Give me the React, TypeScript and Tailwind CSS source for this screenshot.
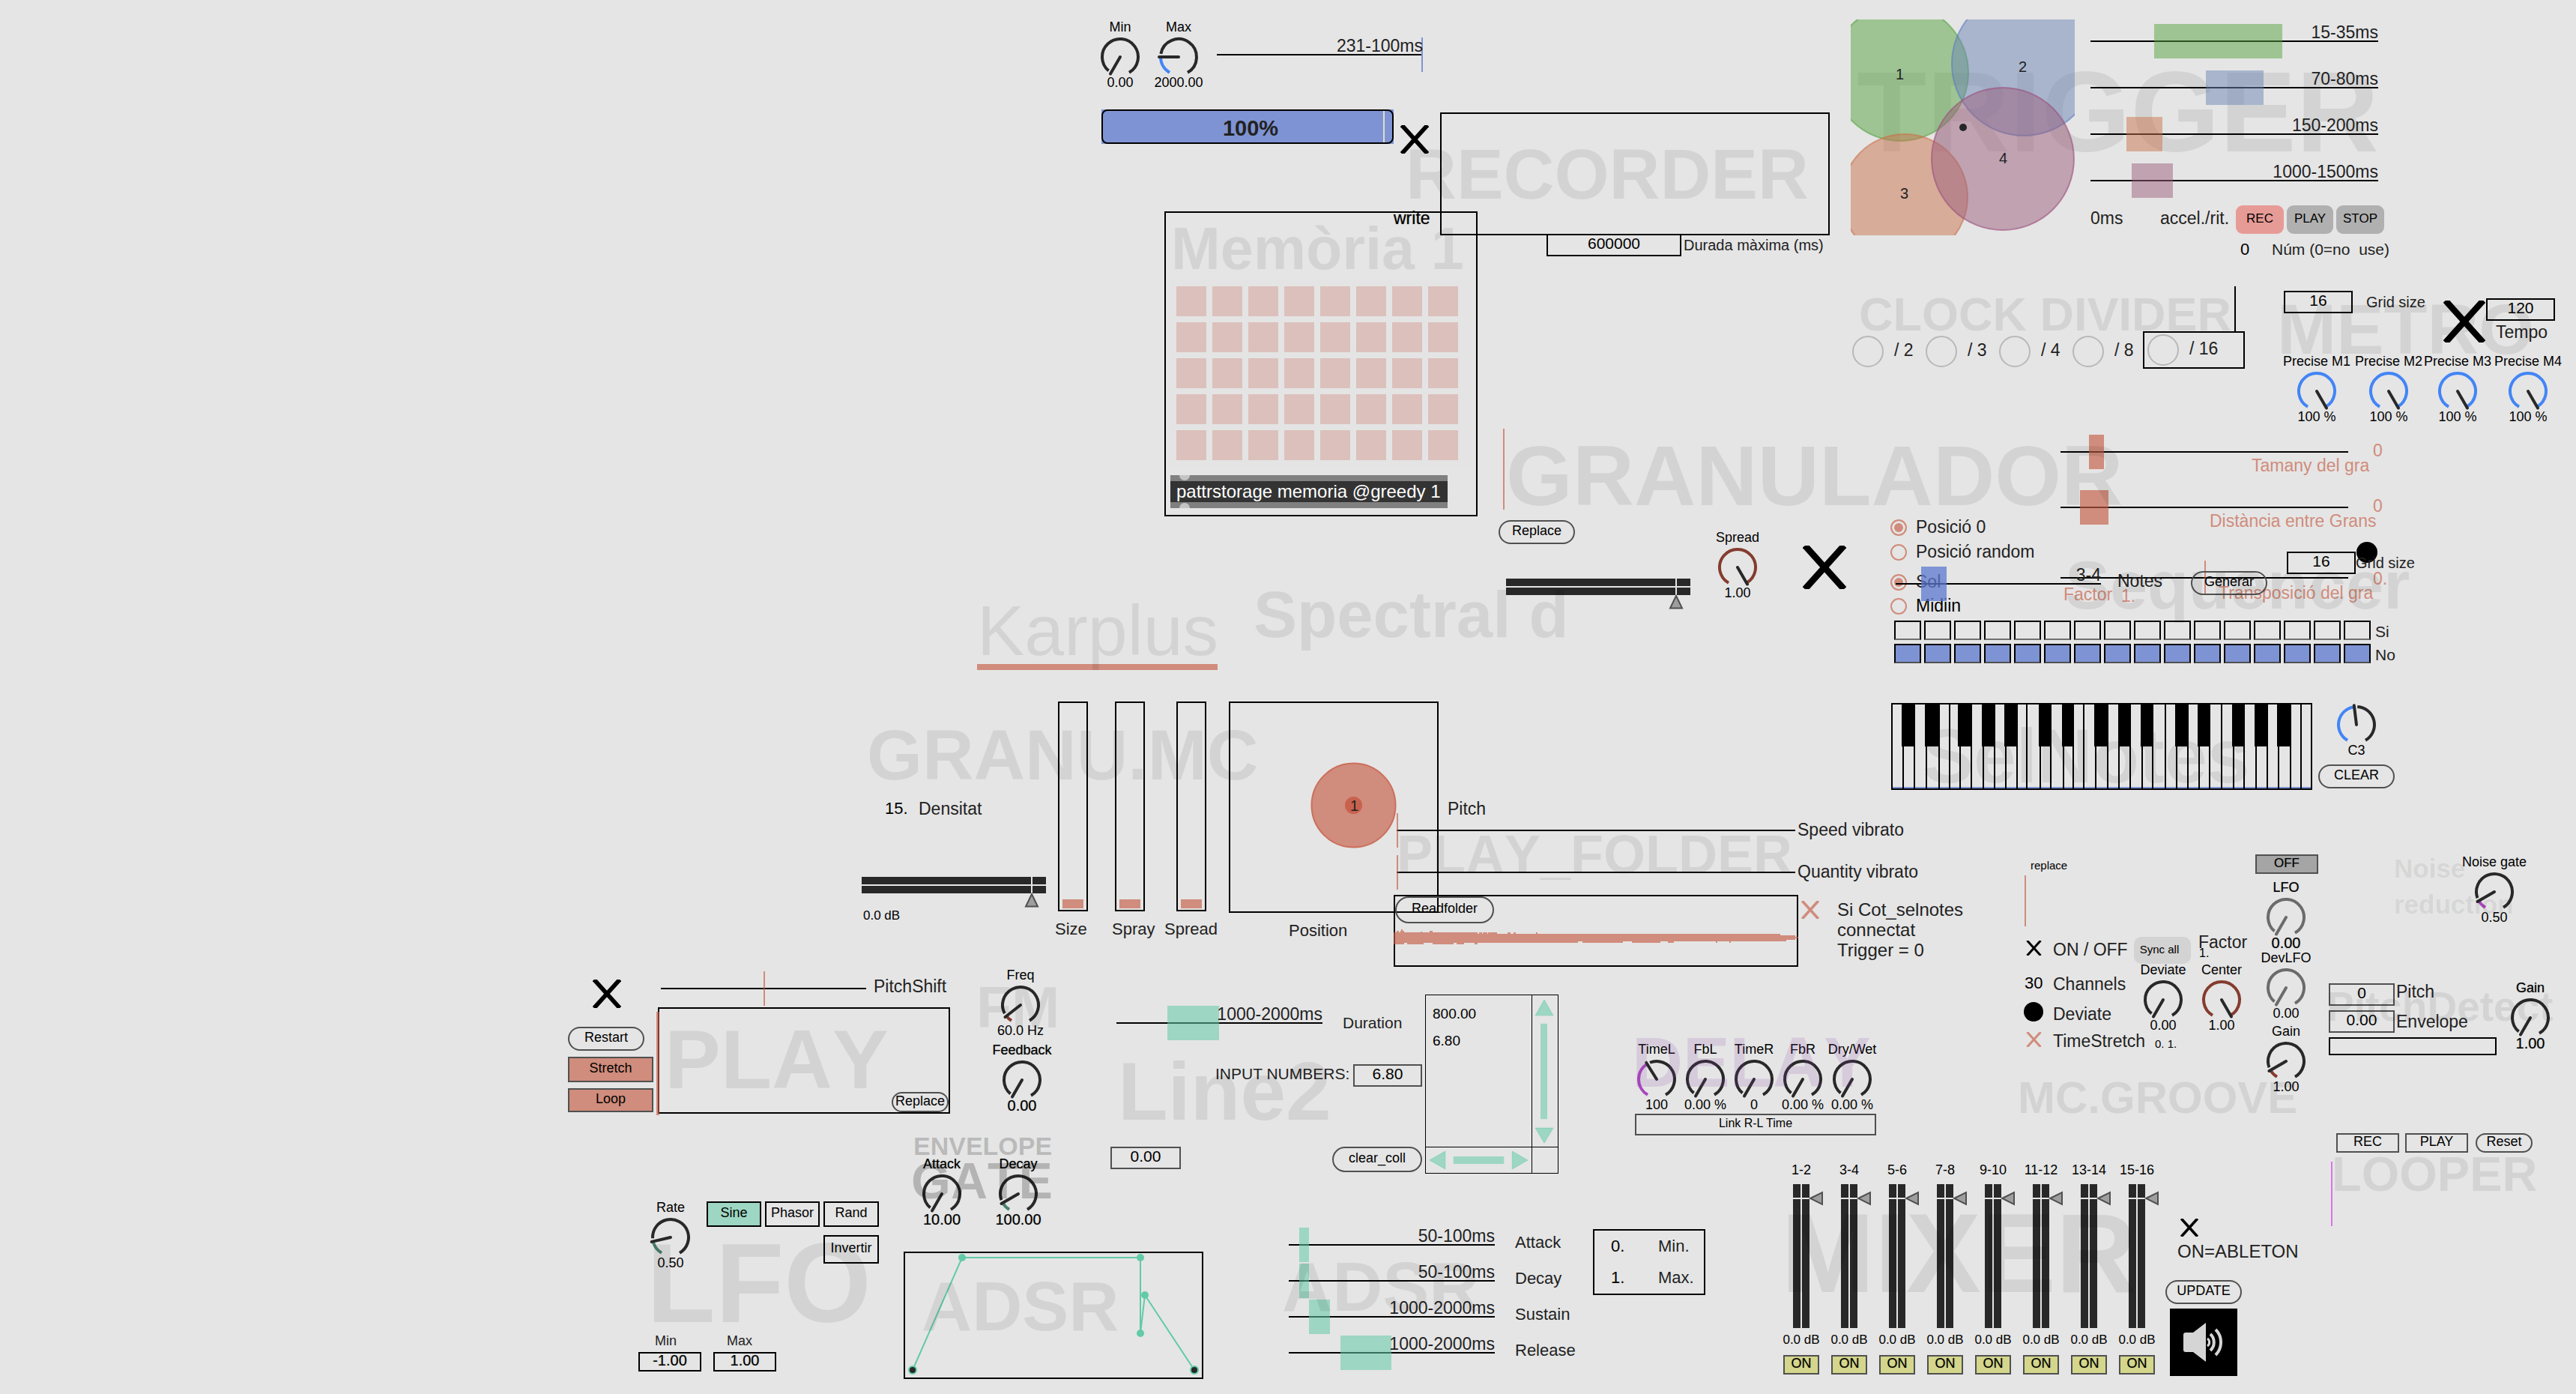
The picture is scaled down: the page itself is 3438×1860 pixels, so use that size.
import React from "react";

type Box = { c: string };

function Text({ c, children }: { c: string; children: React.ReactNode }) {
  return <span className={"absolute whitespace-pre leading-none " + c}>{children}</span>;
}

function Title({ c, children }: { c: string; children: React.ReactNode }) {
  return (
    <h2 className={"pointer-events-none absolute whitespace-pre leading-none [font-kerning:none] " + c}>
      {children}
    </h2>
  );
}

function point(angle: number, r: number) {
  const a = (angle * Math.PI) / 180;
  return `${(30 - r * Math.sin(a)).toFixed(2)} ${(28 + r * Math.cos(a)).toFixed(2)}`;
}

function arc(from: number, to: number) {
  return `M${point(from, 24)} A24 24 0 ${to - from > 180 ? 1 : 0} 1 ${point(to, 24)}`;
}

type DialProps = {
  c: string;
  label?: string;
  value: string;
  at?: number;
  color?: string;
  ink?: string;
  strong?: boolean;
};

function Dial({ c, label = "", value, at = 30, color = "#843c2e", ink = "#282828", strong = false }: DialProps) {
  return (
    <label className={"absolute flex w-[120px] flex-col items-center text-[18px] leading-[18px] whitespace-pre text-black " + c}>
      <span className={strong ? "h-[18px] [text-shadow:0_0_1px_#0008]" : "h-[18px]"}>{label}</span>
      <svg className="mt-[3px] h-[52px] w-[60px] overflow-visible" viewBox="0 0 60 52" fill="none" strokeWidth="4">
        {at > 30 && <path d={arc(30, at)} stroke={color} />}
        {at < 320 && <path d={arc(at + 10, 330)} stroke={ink} />}
        <path d={`M30 28 L${point(at, 26)}`} stroke={ink} strokeLinecap="round" />
      </svg>
      <span className={strong ? "mt-[1px] text-[20px] [text-shadow:0_0_1px_#0006]" : "mt-[1px]"}>{value}</span>
      <input
        type="range"
        min={30}
        max={330}
        defaultValue={at}
        aria-label={label || value}
        className="absolute inset-0 size-full cursor-pointer appearance-none opacity-0"
      />
    </label>
  );
}

function Range({ c, block, text, name }: { c: string; block: string; text?: string; name: string }) {
  return (
    <div className={"absolute h-[46px] " + c}>
      <div className="absolute inset-x-0 top-[22px] h-[2px] bg-black" />
      <div className={"absolute inset-y-0 " + block} />
      {text && <span className="absolute top-0 right-0 text-[23px] leading-none whitespace-pre text-[#222]">{text}</span>}
      <input type="range" aria-label={name} className="absolute inset-0 size-full appearance-none opacity-0" />
    </div>
  );
}

function NumberBox({ c, value, name }: { c: string; value: string; name: string }) {
  return (
    <input
      type="text"
      aria-label={name}
      defaultValue={value}
      className={"absolute border-2 bg-transparent pb-1 text-center leading-none outline-none " + c}
    />
  );
}

function Button({ c, children }: { c: string; children: React.ReactNode }) {
  return (
    <button type="button" className={"flex items-center justify-center pb-1 leading-none whitespace-pre text-black " + c}>
      {children}
    </button>
  );
}

const pill = "absolute rounded-full border-2 border-[#505050] text-[18px] ";

function Cross({ c, width, name, color = "#000" }: { c: string; width: number; name: string; color?: string }) {
  return (
    <label className={"absolute overflow-hidden " + c}>
      <input type="checkbox" defaultChecked aria-label={name} className="absolute inset-0 size-full appearance-none" />
      <svg className="size-full" viewBox="0 0 40 40" stroke={color} strokeWidth={width}>
        <path d="M2 0 L38 40" />
        <path d="M38 0 L2 40" />
      </svg>
    </label>
  );
}

function Radio({ c, name, label, on = false, textClass }: { c: string; name: string; label: string; on?: boolean; textClass: string }) {
  return (
    <label className={"absolute flex items-center gap-[12px] whitespace-pre " + c}>
      <input
        type="radio"
        name={name}
        defaultChecked={on}
        className="size-[22px] appearance-none rounded-full border-2 border-[#d08c7c] checked:bg-[#d08c7c] checked:shadow-[inset_0_0_0_3px_#e5e5e5]"
      />
      <span className={"text-[23px] leading-none " + textClass}>{label}</span>
    </label>
  );
}

function Meter({ c }: Box) {
  return (
    <div className={"absolute flex w-[246px] flex-col gap-[2px] " + c}>
      <div className="h-[10px] bg-[#282828]" />
      <div className="h-[10px] bg-[#282828]" />
      <div className="absolute top-0 left-[226px] h-[22px] w-[2px] bg-[#e5e5e5]" />
      <svg className="absolute top-[21px] left-[217px] h-[20px] w-[20px]" viewBox="0 0 20 20">
        <path d="M10 2 L18 18.500 H2 Z" fill="#9e9e9e" stroke="#505050" strokeWidth="2" />
      </svg>
      <input type="range" aria-label="Gain" className="absolute inset-0 size-full appearance-none opacity-0" />
    </div>
  );
}

const PRESETS = Array.from({ length: 40 }, (_, i) => i + 1);
const STEPS = Array.from({ length: 16 }, (_, i) => i + 1);
const CHANNELS = ["1-2", "3-4", "5-6", "7-8", "9-10", "11-12", "13-14", "15-16"];
const KEY_LINES = [
  16, 31, 47, 64, 78, 92, 107, 123, 138, 153, 168, 181, 199, 213, 230, 243, 257, 273, 289, 304, 319, 335, 349, 366, 381,
  396, 411, 425, 441, 457, 471, 487, 502, 517, 533, 547,
];
const BLACK_KEYS = [
  [15, 17], [46, 17], [90, 18], [122, 16], [152, 17], [198, 16], [229, 15], [272, 17], [304, 16], [334, 16], [380, 16],
  [410, 16], [456, 16], [486, 17], [516, 18],
];

function TopSection() {
  return (
    <section aria-label="Recorder">
      <Dial c="left-[1435px] top-[27px]" label="Min" value="0.00" />
      <Dial c="left-[1513px] top-[27px]" label="Max" value="2000.00" at={90} color="#4285f6" />
      <Range c="left-[1624px] top-[50px] w-[275px]" block="right-0 w-[2px] bg-[#7e93d3]" text="231-100ms" name="Time" />
      <div className="absolute top-[146px] left-[1470px] flex h-[46px] w-[390px] bg-[#7e93d3]">
        <div className="flex w-full items-center justify-center rounded-[8px] border-2 border-black pt-[4px] pl-[8px] text-[29px] leading-none font-bold text-[#222]">
          100%
        </div>
        <div className="absolute top-[2px] right-[12px] h-[42px] w-[2px] bg-[#e0ddd0]" />
      </div>
      <Cross c="left-[1869px] top-[167px] h-[38px] w-[38px]" width={6} name="Record" />
      <div className="absolute top-[150px] left-[1922px] h-[164px] w-[520px] border-2 border-black" />
      <Text c="left-[1860px] top-[280px] text-[23px] text-black [text-shadow:0_0_1px_#0008]">write</Text>
      <NumberBox c="left-[2064px] top-[312px] h-[30px] w-[180px] border-black text-[21px] text-black" value="600000" name="Durada màxima" />
      <Text c="left-[2247px] top-[317px] text-[20px] text-[#222]">Durada màxima (ms)</Text>
    </section>
  );
}

function Memory() {
  return (
    <section aria-label="Memòria" className="absolute top-[282px] left-[1554px] w-[418px] border-2 border-black px-[6px] pt-[90px] pb-[9px]">
      <div className="grid w-[402px] grid-cols-[repeat(8,40px)] gap-[8px] bg-[#e4e4e4] px-[8px] pt-[8px] pb-[11px]">
        {PRESETS.map((n) => (
          <button key={n} type="button" aria-label={"Preset " + n} className="h-[40px] bg-[#dcc0bc]" />
        ))}
      </div>
      <div className="relative mt-[9px] w-[370px] bg-[#808080] py-[8px]">
        <div className="absolute top-0 left-[12px] h-[7px] w-[14px] rounded-b-full bg-[#c4c4c4]" />
        <div className="absolute bottom-0 left-[12px] h-[7px] w-[14px] rounded-t-full bg-[#c4c4c4]" />
        <div className="bg-[#333] px-[8px] text-[24px] leading-[28px] whitespace-pre text-white">pattrstorage memoria @greedy 1</div>
      </div>
    </section>
  );
}

function Trigger() {
  return (
    <section aria-label="Trigger">
      <Title c="left-[2478px] top-[72px] text-[153px] font-bold text-black/8">TRIGGER</Title>
      <svg className="absolute top-[26px] left-[2470px] h-[288px] w-[299px]" viewBox="2470 26 299 288" strokeWidth="2">
        <circle cx="2536" cy="97" r="91" fill="#55a33f" fillOpacity="0.5" stroke="#55a33f" strokeOpacity="0.6" />
        <circle cx="2701" cy="85" r="96" fill="#6b85b5" fillOpacity="0.5" stroke="#5c7cc0" strokeOpacity="0.6" />
        <circle cx="2542" cy="263" r="84" fill="#c9734d" fillOpacity="0.5" stroke="#c9734d" strokeOpacity="0.6" />
        <circle cx="2673" cy="212" r="95" fill="#9b5f7d" fillOpacity="0.5" stroke="#9b4f7d" strokeOpacity="0.6" />
        <circle cx="2620" cy="170" r="5" fill="#262626" />
      </svg>
      <Text c="left-[2530px] top-[89px] text-[20px] text-[#222]">1</Text>
      <Text c="left-[2694px] top-[79px] text-[20px] text-[#222]">2</Text>
      <Text c="left-[2536px] top-[248px] text-[20px] text-[#222]">3</Text>
      <Text c="left-[2668px] top-[201px] text-[20px] text-[#222]">4</Text>
      <Range c="left-[2790px] top-[32px] w-[384px]" block="left-[85px] w-[171px] bg-[#55a33f]/50" text="15-35ms" name="Trigger 1" />
      <Range c="left-[2790px] top-[94px] w-[384px]" block="left-[154px] w-[77px] bg-[#6b85b5]/50" text="70-80ms" name="Trigger 2" />
      <Range c="left-[2790px] top-[156px] w-[384px]" block="left-[48px] w-[48px] bg-[#c9734d]/50" text="150-200ms" name="Trigger 3" />
      <Range c="left-[2790px] top-[218px] w-[384px]" block="left-[55px] w-[55px] bg-[#9b5f7d]/50" text="1000-1500ms" name="Trigger 4" />
      <Text c="left-[2790px] top-[280px] text-[23px] text-[#222]">0ms</Text>
      <Text c="left-[2883px] top-[280px] text-[23px] text-[#222]">accel./rit.</Text>
      <div className="absolute top-[274px] left-[2984px] flex gap-[4px] text-[17px]">
        <Button c="h-[38px] w-[64px] rounded-[9px] bg-[#e79b96]">REC</Button>
        <Button c="h-[38px] w-[62px] rounded-[9px] bg-[#b0b0b0]">PLAY</Button>
        <Button c="h-[38px] w-[64px] rounded-[9px] bg-[#b0b0b0]">STOP</Button>
      </div>
      <Text c="left-[2990px] top-[322px] text-[22px] text-black">0</Text>
      <Text c="left-[3032px] top-[322px] text-[21px] text-[#222]">{"Núm (0=no  use)"}</Text>
    </section>
  );
}

function ClockAndMetro() {
  return (
    <section aria-label="Clock divider and metro">
      <div className="absolute top-[448px] left-[2472px] flex gap-[14px]">
        {["/ 2", "/ 3", "/ 4", "/ 8"].map((t) => (
          <div key={t} className="flex h-[42px] w-[84px] items-center gap-[14px] whitespace-pre">
            <button type="button" aria-label={t} className="size-[42px] shrink-0 rounded-full border-2 border-[#b8b8b8]" />
            <span className="-mt-[4px] text-[23px] leading-none text-[#222]">{t}</span>
          </div>
        ))}
      </div>
      <div className="absolute top-[382px] left-[2982px] h-[62px] w-[2px] bg-black" />
      <div className="absolute top-[442px] left-[2860px] flex h-[50px] w-[136px] items-center gap-[14px] border-2 border-black pl-[4px]">
        <button type="button" aria-label="/ 16" className="size-[42px] rounded-full border-2 border-[#b8b8b8]" />
        <span className="-mt-[4px] text-[23px] leading-none text-[#222]">/ 16</span>
      </div>
      <NumberBox c="left-[3048px] top-[388px] h-[30px] w-[92px] border-black text-[21px] text-black" value="16" name="Grid size" />
      <Text c="left-[3158px] top-[393px] text-[20px] text-[#222]">Grid size</Text>
      <Cross c="left-[3260px] top-[401px] h-[56px] w-[58px]" width={6} name="Metro" />
      <NumberBox c="left-[3318px] top-[398px] h-[30px] w-[92px] border-black text-[21px] text-black" value="120" name="Tempo" />
      <Text c="left-[3331px] top-[432px] text-[23px] text-[#222]">Tempo</Text>
      <Dial c="left-[3032px] top-[473px]" label="Precise M1" value="100 %" at={330} color="#4285f6" />
      <Dial c="left-[3128px] top-[473px]" label="Precise M2" value="100 %" at={330} color="#4285f6" />
      <Dial c="left-[3220px] top-[473px]" label="Precise M3" value="100 %" at={330} color="#4285f6" />
      <Dial c="left-[3314px] top-[473px]" label="Precise M4" value="100 %" at={330} color="#4285f6" />
    </section>
  );
}

function Granulator() {
  return (
    <section aria-label="Granulador">
      <div className="absolute top-[572px] left-[2006px] h-[108px] w-[2px] bg-[#d08c7c]" />
      <Button c={pill + "left-[2000px] top-[694px] h-[32px] w-[102px]"}>Replace</Button>
      <Meter c="left-[2010px] top-[772px]" />
      <Dial c="left-[2259px] top-[708px]" label="Spread" value="1.00" at={330} />
      <Cross c="left-[2406px] top-[728px] h-[58px] w-[58px]" width={6} name="Granulador" />
      <Range c="left-[2750px] top-[580px] w-[384px]" block="left-[38px] w-[20px] bg-[#c55c43]/65" name="Tamany del gra" />
      <Text c="left-[3167px] top-[590px] text-[23px] text-[#d08c7c]">0</Text>
      <Text c="left-[3005px] top-[610px] text-[23px] text-[#d08c7c]">Tamany del gra</Text>
      <Range c="left-[2750px] top-[654px] w-[384px]" block="left-[26px] w-[38px] bg-[#c55c43]/65" name="Distància entre grans" />
      <Text c="left-[3167px] top-[664px] text-[23px] text-[#d08c7c]">0</Text>
      <Text c="left-[2949px] top-[684px] text-[23px] text-[#d08c7c]">Distància entre Grans</Text>
      <Range c="left-[2750px] top-[748px] w-[384px]" block="left-[192px] w-[2px] bg-[#c55c43]/65" name="Transposició del gra" />
      <Text c="left-[3167px] top-[761px] text-[23px] text-[#d08c7c]">0.</Text>
      <Text c="left-[2961px] top-[780px] text-[23px] text-[#d08c7c]">Transposició del gra</Text>
      <Text c="left-[2754px] top-[782px] text-[23px] text-[#d08c7c]">Factor</Text>
      <Text c="left-[2831px] top-[784px] text-[23px] text-[#d08c7c]">1.</Text>
      <Radio c="left-[2523px] top-[692px]" name="position" label="Posició 0" on textClass="text-[#222]" />
      <Radio c="left-[2523px] top-[725px]" name="position" label="Posició random" textClass="text-[#222]" />
      <Radio c="left-[2523px] top-[765px]" name="source" label="Sol" on textClass="text-[#222]" />
      <Radio c="left-[2523px] top-[797px]" name="source" label="Midiin" textClass="text-black" />
    </section>
  );
}

function Sequencer() {
  return (
    <section aria-label="Sequencer">
      <Range c="left-[2530px] top-[756px] w-[274px]" block="left-[34px] w-[34px] bg-[#5c78cd]/75" text="3-4" name="Notes" />
      <Text c="left-[2826px] top-[764px] text-[23px] text-[#222]">Notes</Text>
      <Button c={pill + "left-[2924px] top-[762px] h-[32px] w-[102px]"}>Generar</Button>
      <div className="absolute top-[723px] left-[3145px] size-[28px] rounded-full bg-black" />
      <NumberBox c="left-[3052px] top-[736px] h-[30px] w-[92px] border-black text-[21px] text-black" value="16" name="Sequencer grid size" />
      <Text c="left-[3144px] top-[741px] text-[20px] text-[#222]">Grid size</Text>
      <div className="absolute top-[828px] left-[2528px] flex flex-col gap-[5px]">
        <div className="flex h-[26px] gap-[4px]">
          {STEPS.map((n) => (
            <button key={n} type="button" aria-label={"Si " + n} className="w-[36px] border-2 border-black border-b-[#707070]" />
          ))}
          <span className="ml-[2px] pt-[4px] text-[21px] leading-none text-[#222]">Si</span>
        </div>
        <div className="flex h-[26px] gap-[4px]">
          {STEPS.map((n) => (
            <button key={n} type="button" aria-label={"No " + n} className="w-[36px] border-2 border-black border-b-[#505050] bg-[#7e93d3]" />
          ))}
          <span className="ml-[2px] pt-[4px] text-[21px] leading-none text-[#222]">No</span>
        </div>
      </div>
      <svg className="absolute top-[938px] left-[2524px] h-[116px] w-[562px]" viewBox="0 0 562 116">
        <rect x="1" y="112" width="560" height="3" fill="#7e93d3" />
        {KEY_LINES.map((x) => (
          <rect key={x} x={x - 1} y="1" width="2" height="114" />
        ))}
        {BLACK_KEYS.map(([x, w]) => (
          <rect key={x} x={x - 1} y="1" width={w + 1} height="57" />
        ))}
        <rect x="1" y="1" width="560" height="114" fill="none" stroke="#000" strokeWidth="2" />
      </svg>
      <Dial c="left-[3085px] top-[918px]" value="C3" at={173} color="#4285f6" />
      <Button c={pill + "left-[3094px] top-[1020px] h-[32px] w-[102px]"}>CLEAR</Button>
    </section>
  );
}

function VerticalSlider({ c, name }: { c: string; name: string }) {
  return (
    <div className={"absolute top-[936px] flex h-[280px] w-[40px] items-end border-2 border-black p-[4px] pb-[2px] " + c}>
      <div className="h-[12px] w-full bg-[#d08c7c]" />
      <input type="range" aria-label={name} className="absolute inset-0 size-full appearance-none opacity-0" />
    </div>
  );
}

function GranularMulti() {
  return (
    <section aria-label="Granular multichannel">
      <div className="absolute top-[886px] left-[1304px] h-[8px] w-[321px] bg-[#d08c7c]" />
      <Text c="left-[1181px] top-[1068px] text-[22px] text-black">15.</Text>
      <Text c="left-[1226px] top-[1068px] text-[23px] text-[#222]">Densitat</Text>
      <Meter c="left-[1150px] top-[1170px]" />
      <Text c="left-[1152px] top-[1213px] text-[17px] text-black">0.0 dB</Text>
      <VerticalSlider c="left-[1412px]" name="Size" />
      <VerticalSlider c="left-[1488px]" name="Spray" />
      <VerticalSlider c="left-[1570px]" name="Spread" />
      <Text c="left-[1408px] top-[1229px] text-[22px] text-[#222]">Size</Text>
      <Text c="left-[1484px] top-[1229px] text-[22px] text-[#222]">Spray</Text>
      <Text c="left-[1554px] top-[1229px] text-[22px] text-[#222]">Spread</Text>
      <div className="absolute top-[936px] left-[1640px] h-[282px] w-[280px] border-2 border-black" />
      <svg className="absolute top-[1017px] left-[1749px] size-[115px]" viewBox="0 0 115 115">
        <circle cx="57.500" cy="57.500" r="56" fill="#d08c7c" stroke="#cc6f5c" strokeWidth="2" />
        <circle cx="57.500" cy="57.500" r="11.500" fill="#c8624e" />
      </svg>
      <Text c="left-[1802px] top-[1065px] text-[20px] text-[#222]">1</Text>
      <Text c="left-[1720px] top-[1231px] text-[22px] text-[#222]">Position</Text>
    </section>
  );
}

const WAVE =
  "M0 50 H4 V48 H7 V50 H9 V48 H10 V46 H12 V48 H14 V50 H36 V49 H38 V50 H48 V48 H52 V50 H112 V52 H114 V50 H118 V52 H119 V50 H125 V52 H126 V50 H138 V52 H152 V50 H156 V52 H160 V50 H163 V52 H190 V50 H192 V52 H516 V54 H536 V56 H540 V58 H536 V60 H524 V62 H450 V64 H448 V62 H432 V64 H430 V62 H374 V64 H366 V62 H356 V64 H318 V62 H306 V64 H300 V62 H304 V64 H252 V62 H246 V64 H112 V66 H108 V64 H94 V66 H84 V64 H80 V66 H52 V64 H40 V66 H18 V64 H14 V66 H0 Z";

function PlayFolder() {
  return (
    <section aria-label="Play folder">
      <Text c="left-[1932px] top-[1068px] text-[23px] text-[#222]">Pitch</Text>
      <Range c="left-[1864px] top-[1085px] w-[532px]" block="left-0 w-[2px] bg-[#c55c43]/65" name="Speed vibrato" />
      <Text c="left-[2399px] top-[1096px] text-[23px] text-[#222]">Speed vibrato</Text>
      <Range c="left-[1864px] top-[1141px] w-[532px]" block="left-0 w-[2px] bg-[#c55c43]/65" name="Quantity vibrato" />
      <Text c="left-[2399px] top-[1152px] text-[23px] text-[#222]">Quantity vibrato</Text>
      <div className="absolute top-[1194px] left-[1860px] h-[96px] w-[540px] border-2 border-black" />
      <svg className="absolute top-[1194px] left-[1860px] h-[96px] w-[540px]" viewBox="0 0 540 96">
        <path d={WAVE} fill="#c55c43" fillOpacity="0.65" />
      </svg>
      <Button c={pill + "left-[1862px] top-[1196px] h-[36px] w-[132px]"}>Readfolder</Button>
      <Cross c="left-[2403px] top-[1202px] h-[24px] w-[26px]" width={6} name="Si Cot_selnotes connectat" color="#d08c7c" />
      <p className="absolute top-[1200px] left-[2452px] text-[24px] leading-[27px] whitespace-pre text-[#222]">
        {"Si Cot_selnotes\nconnectat\nTrigger = 0"}
      </p>
    </section>
  );
}

function Groove() {
  return (
    <section aria-label="Groove">
      <Text c="left-[2710px] top-[1147px] text-[15px] text-black">replace</Text>
      <div className="absolute top-[1168px] left-[2702px] h-[68px] w-[2px] bg-[#d08c7c]" />
      <Cross c="left-[2704px] top-[1255px] h-[20px] w-[21px]" width={6} name="On / off" />
      <Text c="left-[2740px] top-[1256px] text-[23px] text-[#222]">ON / OFF</Text>
      <Text c="left-[2702px] top-[1301px] text-[22px] text-black">30</Text>
      <Text c="left-[2740px] top-[1302px] text-[23px] text-[#222]">Channels</Text>
      <div className="absolute top-[1337px] left-[2701px] size-[26px] rounded-full bg-black" />
      <Text c="left-[2740px] top-[1342px] text-[23px] text-[#222]">Deviate</Text>
      <Cross c="left-[2704px] top-[1377px] h-[20px] w-[21px]" width={6} name="TimeStretch" color="#d08c7c" />
      <Text c="left-[2740px] top-[1378px] text-[23px] text-[#222]">TimeStretch</Text>
      <Text c="left-[2876px] top-[1385px] text-[15px] text-black">0. 1.</Text>
      <Button c="absolute left-[2848px] top-[1250px] h-[36px] w-[76px] rounded-[10px] bg-[#d3d3d3] pr-[8px] text-[15px]">Sync all</Button>
      <Text c="left-[2934px] top-[1246px] text-[23px] text-[#222]">Factor</Text>
      <Text c="left-[2935px] top-[1264px] text-[16px] text-black">1.</Text>
      <Dial c="left-[2827px] top-[1285px]" label="Deviate" value="0.00" />
      <Dial c="left-[2905px] top-[1285px]" label="Center" value="1.00" at={330} />
      <Button c="absolute left-[3010px] top-[1140px] h-[26px] w-[84px] border-2 border-[#505050] bg-[#a5a5a5] pb-0 text-[17px] [text-shadow:0_0_1px_#0006]">OFF</Button>
      <Dial c="left-[2991px] top-[1175px]" label="LFO" value="0.00" ink="#6b6b6b" strong />
      <Dial c="left-[2991px] top-[1269px]" label="DevLFO" value="0.00" ink="#6b6b6b" />
      <Dial c="left-[2991px] top-[1367px]" label="Gain" value="1.00" at={60} />
    </section>
  );
}

function RightColumn() {
  return (
    <section aria-label="Noise gate, pitch detection and looper">
      <Dial c="left-[3269px] top-[1141px]" label="Noise gate" value="0.50" at={60} color="#aa46be" />
      <NumberBox c="left-[3108px] top-[1312px] h-[30px] w-[88px] border-[#505050] text-[21px] text-black" value="0" name="Pitch" />
      <Text c="left-[3198px] top-[1312px] text-[23px] text-[#222]">Pitch</Text>
      <NumberBox c="left-[3108px] top-[1348px] h-[30px] w-[88px] border-[#505050] text-[21px] text-black" value="0.00" name="Envelope" />
      <Text c="left-[3198px] top-[1352px] text-[23px] text-[#222]">Envelope</Text>
      <div className="absolute top-[1384px] left-[3108px] h-[24px] w-[224px] border-2 border-black" />
      <Dial c="left-[3317px] top-[1309px]" label="Gain" value="1.00" strong />
      <div className="absolute top-[1512px] left-[3118px] flex gap-[8px] text-[18px]">
        <Button c="h-[26px] w-[84px] border-2 border-[#505050]">REC</Button>
        <Button c="h-[26px] w-[84px] border-2 border-[#505050]">PLAY</Button>
        <Button c="ml-[2px] h-[26px] w-[76px] rounded-full border-2 border-[#505050]">Reset</Button>
      </div>
      <div className="absolute top-[1550px] left-[3111px] h-[86px] w-[2px] bg-[#d975e8]" />
    </section>
  );
}

function Player() {
  return (
    <section aria-label="Play">
      <Cross c="left-[791px] top-[1307px] h-[38px] w-[38px]" width={6} name="Play" />
      <Range c="left-[882px] top-[1296px] w-[274px]" block="left-[137px] w-[2px] bg-[#c55c43]/65" name="PitchShift" />
      <Text c="left-[1166px] top-[1305px] text-[23px] text-[#222]">PitchShift</Text>
      <Button c={pill + "left-[758px] top-[1370px] h-[32px] w-[102px]"}>Restart</Button>
      <Button c="absolute left-[758px] top-[1410px] h-[34px] w-[114px] border-2 border-[#505050] bg-[#d08c7c] text-[18px]">Stretch</Button>
      <Button c="absolute left-[758px] top-[1452px] h-[32px] w-[114px] border-2 border-[#505050] bg-[#d08c7c] text-[18px]">Loop</Button>
      <div className="absolute top-[1344px] left-[878px] h-[142px] w-[390px] border-2 border-black" />
      <div className="absolute top-[1350px] left-[876px] h-[138px] w-[4px] bg-[#c55c43]/65" />
      <Button c={pill + "left-[1190px] top-[1457px] h-[27px] w-[76px]"}>Replace</Button>
      <Dial c="left-[1302px] top-[1292px]" label="Freq" value="60.0 Hz" at={52} />
      <Dial c="left-[1304px] top-[1392px]" label="Feedback" value="0.00" strong />
    </section>
  );
}

function Lfo() {
  return (
    <section aria-label="LFO and envelope gate">
      <Dial c="left-[835px] top-[1602px]" label="Rate" value="0.50" at={77} color="#4a7f6e" />
      <div className="absolute top-[1603px] left-[943px] grid grid-cols-[73px_73px_74px] gap-x-[5px] gap-y-[11px] text-[18px]">
        <Button c="h-[34px] border-2 border-black bg-[#9dd6c3]">Sine</Button>
        <Button c="h-[34px] border-2 border-black">Phasor</Button>
        <Button c="h-[34px] border-2 border-black">Rand</Button>
        <Button c="col-start-3 h-[38px] border-2 border-black">Invertir</Button>
      </div>
      <Text c="left-[874px] top-[1780px] text-[18px] text-[#222]">Min</Text>
      <Text c="left-[970px] top-[1780px] text-[18px] text-[#222]">Max</Text>
      <NumberBox c="left-[852px] top-[1804px] h-[26px] w-[84px] border-black pb-0 text-[20px] [text-shadow:0_0_1px_#0006]" value="-1.00" name="Min" />
      <NumberBox c="left-[952px] top-[1804px] h-[26px] w-[84px] border-black pb-0 text-[20px] [text-shadow:0_0_1px_#0006]" value="1.00" name="Max" />
      <Dial c="left-[1197px] top-[1544px]" label="Attack" value="10.00" strong />
      <Dial c="left-[1299px] top-[1544px]" label="Decay" value="100.00" at={60} color="#4a7f6e" strong />
      <svg className="absolute top-[1670px] left-[1206px] h-[170px] w-[400px]" viewBox="1206 1670 400 170" fill="none">
        <rect x="1207" y="1671" width="398" height="168" stroke="#000" strokeWidth="2" />
        <path d="M1218 1828 L1284 1678 H1522 V1779 L1528 1728 L1594 1828" stroke="#62caa7" strokeWidth="2" />
        <g fill="#62caa7">
          <circle cx="1284" cy="1678" r="5" />
          <circle cx="1522" cy="1678" r="5" />
          <circle cx="1522" cy="1779" r="5" />
          <circle cx="1528" cy="1728" r="5" />
        </g>
        <g fill="#282828" stroke="#62caa7" strokeWidth="2">
          <circle cx="1218" cy="1828" r="5" />
          <circle cx="1594" cy="1828" r="5" />
        </g>
      </svg>
    </section>
  );
}

function Line() {
  return (
    <section aria-label="Line">
      <Range c="left-[1490px] top-[1342px] w-[275px]" block="left-[68px] w-[69px] bg-[#62caa7]/55" text="1000-2000ms" name="Duration" />
      <Text c="left-[1792px] top-[1354px] text-[21px] text-[#222]">Duration</Text>
      <Text c="left-[1622px] top-[1422px] text-[21px] text-[#222]">INPUT NUMBERS:</Text>
      <NumberBox c="left-[1806px] top-[1420px] h-[30px] w-[92px] border-[#505050] text-[21px] text-black" value="6.80" name="Input numbers" />
      <NumberBox c="left-[1482px] top-[1530px] h-[30px] w-[94px] border-[#505050] text-[21px] text-black" value="0.00" name="Line value" />
      <Button c={pill + "left-[1778px] top-[1530px] h-[34px] w-[120px]"}>clear_coll</Button>
      <div className="absolute top-[1327px] left-[1902px] grid h-[239px] w-[178px] grid-cols-[1fr_34px] grid-rows-[1fr_34px] border border-black">
        <div className="border-r border-b border-black pt-[7px] pl-[9px] text-[19px] text-black">
          <p className="leading-[36px]">800.00</p>
          <p className="leading-[36px]">6.80</p>
        </div>
        <svg className="h-full w-full border-b border-black" viewBox="0 0 34 203" fill="#62caa7" fillOpacity="0.55" stroke="#62caa7" strokeOpacity="0.5">
          <path d="M16 6 L28 27 H4 Z" />
          <rect x="11" y="38" width="9" height="128" stroke="none" />
          <path d="M16 198 L28 178 H4 Z" />
        </svg>
        <svg className="h-full w-full border-r border-black" viewBox="0 0 142 34" fill="#62caa7" fillOpacity="0.55" stroke="#62caa7" strokeOpacity="0.5">
          <path d="M5 17 L26 5 V29 Z" />
          <rect x="37" y="12" width="68" height="10" stroke="none" />
          <path d="M137 17 L116 5 V29 Z" />
        </svg>
      </div>
    </section>
  );
}

function Adsr() {
  return (
    <section aria-label="ADSR">
      <Range c="left-[1720px] top-[1638px] w-[275px]" block="left-[14px] w-[13px] bg-[#62caa7]/55" text="50-100ms" name="Attack" />
      <Range c="left-[1720px] top-[1686px] w-[275px]" block="left-[14px] w-[13px] bg-[#62caa7]/55" text="50-100ms" name="Decay" />
      <Range c="left-[1720px] top-[1734px] w-[275px]" block="left-[27px] w-[28px] bg-[#62caa7]/55" text="1000-2000ms" name="Sustain" />
      <Range c="left-[1720px] top-[1782px] w-[275px]" block="left-[69px] w-[68px] bg-[#62caa7]/55" text="1000-2000ms" name="Release" />
      <div className="absolute top-[1634px] left-[2022px] flex flex-col text-[22px] leading-[48px] text-[#222]">
        <span>Attack</span>
        <span>Decay</span>
        <span>Sustain</span>
        <span>Release</span>
      </div>
      <div className="absolute top-[1640px] left-[2126px] grid h-[88px] w-[150px] grid-cols-[63px_1fr] border-2 border-black pl-[22px] text-[22px] leading-[42px]">
        <span className="text-black">0.</span>
        <span className="text-[#222]">Min.</span>
        <span className="text-black">1.</span>
        <span className="text-[#222]">Max.</span>
      </div>
    </section>
  );
}

function Delay() {
  return (
    <section aria-label="Delay">
      <Dial c="left-[2151px] top-[1391px]" label="TimeL" value="100" at={148} color="#aa46be" />
      <Dial c="left-[2216px] top-[1391px]" label="FbL" value="0.00 %" />
      <Dial c="left-[2281px] top-[1391px]" label="TimeR" value="0" />
      <Dial c="left-[2346px] top-[1391px]" label="FbR" value="0.00 %" />
      <Dial c="left-[2412px] top-[1391px]" label="Dry/Wet" value="0.00 %" />
      <Button c="absolute left-[2182px] top-[1486px] h-[29px] w-[322px] border-2 border-[#505050] text-[16px]">Link R-L Time</Button>
    </section>
  );
}

function Mixer() {
  return (
    <section aria-label="Mixer">
      <div className="absolute top-[1552px] left-[2380px] flex gap-[16px]">
        {CHANNELS.map((ch) => (
          <div key={ch} className="flex w-[48px] flex-col items-center whitespace-pre text-black">
            <span className="text-[18px] leading-[18px]">{ch}</span>
            <div className="relative mt-[10px] flex h-[192px] gap-[2px]">
              <div className="w-[10px] bg-[#282828]" />
              <div className="w-[10px] bg-[#282828]" />
              <div className="absolute top-[18px] left-0 h-[2px] w-[22px] bg-[#e5e5e5]" />
              <svg className="absolute top-[9px] left-[21px] h-[20px] w-[20px]" viewBox="0 0 20 20">
                <path d="M2 10 L18 2 V18 Z" fill="#9e9e9e" stroke="#505050" strokeWidth="2" />
              </svg>
              <input type="range" aria-label={"Level " + ch} className="absolute inset-0 size-full appearance-none opacity-0" />
            </div>
            <span className="mt-[7px] text-[17px] leading-[17px]">0.0 dB</span>
            <Button c="mt-[12px] h-[26px] w-[48px] border-2 border-[#505050] bg-[#d4d68c] pb-0 text-[18px] [text-shadow:0_0_1px_#0006]">ON</Button>
          </div>
        ))}
      </div>
      <Cross c="left-[2909px] top-[1626px] h-[24px] w-[26px]" width={6} name="ON=ABLETON" />
      <Text c="left-[2906px] top-[1658px] text-[24px] text-[#222]">ON=ABLETON</Text>
      <Button c={pill + "left-[2890px] top-[1708px] h-[32px] w-[102px]"}>UPDATE</Button>
      <button type="button" aria-label="Audio" className="absolute top-[1746px] left-[2896px] h-[90px] w-[90px] bg-black">
        <svg className="size-full" viewBox="0 0 90 90" fill="none" stroke="#d5d5d5" strokeWidth="4">
          <path d="M21 32 H31 L48 19 V71 L31 58 H21 Q18 58 18 55 V35 Q18 32 21 32 Z" fill="#d5d5d5" stroke="none" />
          <path d="M50 40 A6 6 0 0 1 50 50" strokeWidth="3" />
          <path d="M54 34 A15 15 0 0 1 54 56" />
          <path d="M61 28 A24 24 0 0 1 61 62" />
        </svg>
      </button>
    </section>
  );
}

function Titles() {
  return (
    <div className="font-bold text-black/8">
      <Title c="left-[1876px] top-[186px] text-[94px]">RECORDER</Title>
      <Title c="left-[1563px] top-[292px] text-[79px]">Memòria 1</Title>
      <Title c="left-[2481px] top-[388px] text-[63px]">CLOCK DIVIDER</Title>
      <Title c="left-[3039px] top-[392px] text-[95px]">METRO</Title>
      <Title c="left-[2010px] top-[578px] text-[114px]">GRANULADOR</Title>
      <Title c="left-[1304px] top-[794px] text-[95px] font-normal">Karplus</Title>
      <Title c="left-[1673px] top-[776px] text-[87px]">Spectral d</Title>
      <Title c="left-[2756px] top-[736px] text-[90px]">Sequencer</Title>
      <Title c="left-[1157px] top-[960px] text-[95px]">GRANU.MC</Title>
      <Title c="left-[1864px] top-[1104px] text-[72px]">PLAY_FOLDER</Title>
      <Title c="left-[2566px] top-[958px] text-[102px]">SelNotes</Title>
      <Title c="left-[1303px] top-[1306px] text-[77px]">FM</Title>
      <Title c="left-[887px] top-[1358px] text-[112px]">PLAY</Title>
      <Title c="left-[1219px] top-[1512px] text-[34px] text-black/21">ENVELOPE</Title>
      <Title c="left-[1216px] top-[1541px] text-[68px] text-black/21">GATE</Title>
      <Title c="left-[863px] top-[1637px] text-[150px]">LFO</Title>
      <Title c="left-[1230px] top-[1697px] text-[93px]">ADSR</Title>
      <Title c="left-[1711px] top-[1671px] text-[93px]">ADSR</Title>
      <Title c="left-[1492px] top-[1402px] text-[109px]">Line2</Title>
      <Title c="left-[2178px] top-[1371px] text-[94px] text-[#8b44a8]/16">DELAY</Title>
      <Title c="left-[2377px] top-[1597px] text-[150px]">MIXER</Title>
      <Title c="left-[2693px] top-[1435px] text-[60px]">MC.GROOVE</Title>
      <Title c="left-[3195px] top-[1141px] text-[35px]">Noise</Title>
      <Title c="left-[3195px] top-[1189px] text-[35px]">reduction</Title>
      <Title c="left-[3105px] top-[1316px] text-[55px]">PitchDetect</Title>
      <Title c="left-[3112px] top-[1534px] text-[65px]">LOOPER</Title>
    </div>
  );
}

export default function App() {
  return (
    <main className="relative min-h-screen w-full overflow-hidden bg-[#e5e5e5] font-['Liberation_Sans',Arial,sans-serif]">
      <Memory />
      <TopSection />
      <Trigger />
      <ClockAndMetro />
      <Granulator />
      <Sequencer />
      <GranularMulti />
      <PlayFolder />
      <Groove />
      <RightColumn />
      <Player />
      <Lfo />
      <Line />
      <Adsr />
      <Delay />
      <Mixer />
      <Titles />
    </main>
  );
}
